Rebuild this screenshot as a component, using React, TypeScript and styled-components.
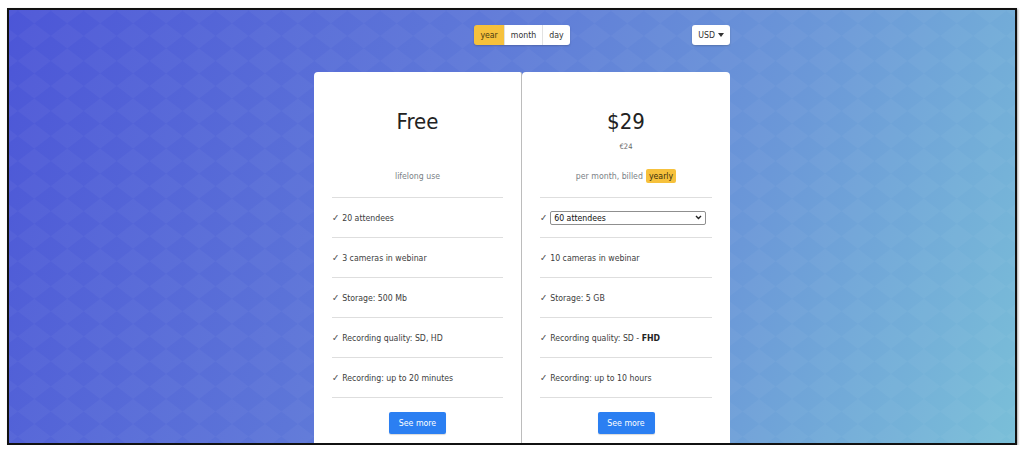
import React, { useState } from "react";
import styled, { createGlobalStyle, css } from "styled-components";

const Global = createGlobalStyle`
  html, body { margin: 0; padding: 0; background: #ffffff; }
  body { font-family: "DejaVu Sans Condensed", "DejaVu Sans", "Liberation Sans", sans-serif; }
  * { box-sizing: border-box; }
`;

const Frame = styled.div`
  margin: 8px 0 0 7px;
  width: 1010px;
  height: 437px;
  border: 2px solid #111;
  box-shadow: 1px 1px 2px rgba(0, 0, 0, 0.35);
  overflow: hidden;
  position: relative;
  background: linear-gradient(112deg, #4c56d7 0%, #5e78d8 40%, #6b98d8 70%, #7abfd8 100%);
`;

const Pattern = styled.div`
  position: absolute;
  left: 50%;
  top: 50%;
  width: 1800px;
  height: 1800px;
  margin: -900px 0 0 -900px;
  transform: scale(1, 0.76) rotate(45deg);
  background: repeating-conic-gradient(rgba(255, 255, 255, 0.03) 0 25%, transparent 0 50%) 0 0 / 46.6px 46.6px;
  pointer-events: none;
`;

const Page = styled.div`
  position: relative;
  z-index: 1;
  display: flex;
  flex-direction: column;
  align-items: center;
  padding: 15px 0 0 20px;
`;

const Container = styled.div`
  width: 416px;
  display: flex;
  flex-direction: column;
`;

const TopBar = styled.div`
  display: grid;
  grid-template-columns: 1fr auto 1fr;
  align-items: center;
  height: 20px;
`;

const Toggle = styled.div`
  display: flex;
  height: 20px;
  border-radius: 3px;
  overflow: hidden;
  box-shadow: 0 1px 2px rgba(0, 0, 0, 0.2);
`;

const ToggleBtn = styled.button<{ $active?: boolean }>`
  border: none;
  border-left: 1px solid #e2e2e2;
  height: 20px;
  padding: 0 6px;
  font: inherit;
  font-size: 8.7px;
  color: #333;
  background: #fff;
  cursor: pointer;
  &:first-child { border-left: none; }
  ${(p) =>
    p.$active &&
    css`
      background: #f6c13c;
      color: #4a3b10;
    `}
`;

const Currency = styled.button`
  justify-self: end;
  display: flex;
  align-items: center;
  gap: 3px;
  height: 20px;
  padding: 0 6px;
  border: none;
  border-radius: 3px;
  background: #fff;
  box-shadow: 0 1px 2px rgba(0, 0, 0, 0.2);
  font: inherit;
  font-size: 8.7px;
  color: #333;
`;

const Caret = styled.span`
  width: 0;
  height: 0;
  border-left: 3.5px solid transparent;
  border-right: 3.5px solid transparent;
  border-top: 4px solid #333;
`;

const Cards = styled.div`
  display: flex;
  margin-top: 27px;
`;

const Card = styled.div<{ $divider?: boolean }>`
  width: 208px;
  height: 400px;
  background: #fff;
  border-radius: 4px 4px 0 0;
  padding: 0 18px;
  display: flex;
  flex-direction: column;
  ${(p) =>
    p.$divider &&
    css`
      border-right: 1px solid #bcbcbc;
      border-top-right-radius: 2px;
    `}
`;

const Header = styled.div`
  height: 126px;
  border-bottom: 1px solid #dedede;
  display: flex;
  flex-direction: column;
  align-items: center;
  padding: 37px 0 14px;
`;

const Price = styled.div`
  font-size: 22px;
  line-height: 26px;
  color: #222;
`;

const SubPrice = styled.div`
  margin-top: 6px;
  font-size: 7.5px;
  line-height: 12px;
  color: #666;
`;

const Billing = styled.div`
  margin-top: auto;
  height: 14px;
  display: flex;
  align-items: center;
  gap: 3px;
  font-size: 8.7px;
  color: #7a7f86;
`;

const Badge = styled.span`
  background: #f6c13c;
  color: #3b300c;
  border-radius: 2px;
  padding: 1px 3px;
  line-height: 12px;
`;

const Row = styled.div`
  height: 40px;
  border-bottom: 1px solid #dedede;
  display: flex;
  align-items: center;
  gap: 3px;
  font-size: 8.7px;
  color: #3d3d3d;
  b { font-weight: bold; color: #222; }
`;

const Check = styled.span`
  color: #555;
  font-size: 9.5px;
`;

const SelectWrap = styled.div`
  position: relative;
  width: 156px;
  display: flex;
`;

const Select = styled.select`
  appearance: none;
  width: 100%;
  height: 14px;
  padding: 0 14px 0 3px;
  border: 1px solid #8f8f8f;
  border-radius: 2px;
  background: #fff;
  font: inherit;
  font-size: 8.7px;
  line-height: 12px;
  color: #111;
  outline: none;
`;

const Chevron = styled.svg`
  position: absolute;
  right: 4px;
  top: 4px;
  pointer-events: none;
`;

const Footer = styled.div`
  padding-top: 14px;
  display: flex;
  justify-content: center;
`;

const MoreBtn = styled.button`
  width: 57px;
  height: 22px;
  border: none;
  border-radius: 2px;
  background: #2b7ff2;
  color: #fff;
  font: inherit;
  font-size: 8.7px;
  box-shadow: 0 1px 1px rgba(0, 0, 0, 0.15);
`;

const Feature: React.FC<{ children: React.ReactNode }> = ({ children }) => (
  <Row>
    <Check>✓</Check>
    <span>{children}</span>
  </Row>
);

export default function App() {
  const [period, setPeriod] = useState("year");
  return (
    <>
      <Global />
      <Frame>
        <Pattern />
        <Page>
          <Container>
            <TopBar>
              <span />
              <Toggle>
                {["year", "month", "day"].map((p) => (
                  <ToggleBtn key={p} $active={period === p} onClick={() => setPeriod(p)}>
                    {p}
                  </ToggleBtn>
                ))}
              </Toggle>
              <Currency>
                USD <Caret />
              </Currency>
            </TopBar>
            <Cards>
              <Card $divider>
                <Header>
                  <Price>Free</Price>
                  <Billing>lifelong use</Billing>
                </Header>
                <Feature>20 attendees</Feature>
                <Feature>3 cameras in webinar</Feature>
                <Feature>Storage: 500 Mb</Feature>
                <Feature>Recording quality: SD, HD</Feature>
                <Feature>Recording: up to 20 minutes</Feature>
                <Footer>
                  <MoreBtn>See more</MoreBtn>
                </Footer>
              </Card>
              <Card>
                <Header>
                  <Price>$29</Price>
                  <SubPrice>€24</SubPrice>
                  <Billing>
                    per month, billed <Badge>yearly</Badge>
                  </Billing>
                </Header>
                <Row>
                  <Check>✓</Check>
                  <SelectWrap>
                    <Select defaultValue="60">
                      <option value="60">60 attendees</option>
                      <option value="100">100 attendees</option>
                      <option value="200">200 attendees</option>
                    </Select>
                    <Chevron width="7" height="5" viewBox="0 0 7 5">
                      <path d="M1 1 L3.5 3.5 L6 1" stroke="#222" strokeWidth="1.4" fill="none" />
                    </Chevron>
                  </SelectWrap>
                </Row>
                <Feature>10 cameras in webinar</Feature>
                <Feature>Storage: 5 GB</Feature>
                <Feature>
                  Recording quality: SD - <b>FHD</b>
                </Feature>
                <Feature>Recording: up to 10 hours</Feature>
                <Footer>
                  <MoreBtn>See more</MoreBtn>
                </Footer>
              </Card>
            </Cards>
          </Container>
        </Page>
      </Frame>
    </>
  );
}
